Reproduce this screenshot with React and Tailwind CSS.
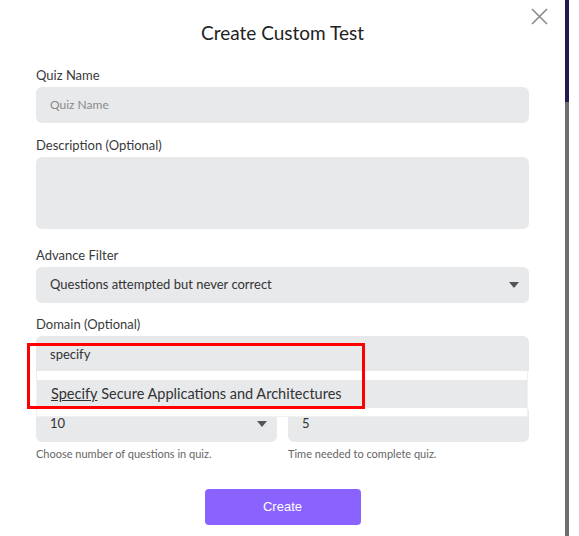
import { useState } from "react";

function Caret() {
  return (
    <svg width="10" height="6" viewBox="0 0 10 6" className="shrink-0">
      <path d="M0 0h10L5 6z" fill="#555" />
    </svg>
  );
}

function Label({ children, className = "" }) {
  return (
    <p className={`text-[13px] leading-4 text-[#3a3a3a] ${className}`}>{children}</p>
  );
}

export default function App() {
  const [domain, setDomain] = useState("specify");

  return (
    <div className="w-[579px] h-[536px] bg-white flex overflow-hidden font-['Lato','Noto_Sans',sans-serif]">
      {/* MODAL */}
      <div className="relative w-[565px] h-full px-9 pt-[21px]">
        <button className="absolute right-[17px] top-[8px] text-[#8a8a8a]">
          <svg width="17" height="17" viewBox="0 0 17 17" fill="none" stroke="currentColor" strokeWidth="1.6">
            <path d="M1 1l15 15M16 1L1 16" />
          </svg>
        </button>

        <h1 className="text-center text-[19px] leading-6 text-[#222]">Create Custom Test</h1>

        <Label className="mt-[22px]">Quiz Name</Label>
        <div className="mt-1 h-9 rounded-md bg-[#e8e9eb] flex items-center px-[14px] text-[12px] text-[#8a8a8a]">
          Quiz Name
        </div>

        <Label className="mt-[14px]">Description (Optional)</Label>
        <div className="mt-1 h-[72px] rounded-md bg-[#e8e9eb]" />

        <Label className="mt-[18px]">Advance Filter</Label>
        <div className="mt-1 h-9 rounded-md bg-[#e8e9eb] flex items-center justify-between pl-[14px] pr-[10px] text-[13px] text-[#333]">
          <span>Questions attempted but never correct</span>
          <Caret />
        </div>

        <Label className="mt-[13px]">Domain (Optional)</Label>
        <input
          value={domain}
          onChange={(e) => setDomain(e.target.value)}
          className="mt-1 w-full h-[35px] rounded-t-md bg-[#e8e9eb] px-[14px] text-[13px] text-[#333] outline-none"
        />

        {/* labels of this row sit under the open list */}
        <div className="mt-[15px] grid grid-cols-2 gap-[11px]">
          <div>
            <div className="h-4" />
            <div className="mt-1 h-9 rounded-md bg-[#e8e9eb] flex items-center justify-between pl-[14px] pr-[10px] text-[13px] text-[#333]">
              <span>10</span>
              <Caret />
            </div>
            <p className="mt-[5px] text-[11px] leading-[14px] text-[#666]">Choose number of questions in quiz.</p>
          </div>
          <div>
            <div className="h-4" />
            <div className="mt-1 h-9 rounded-md bg-[#e8e9eb] flex items-center px-[14px] text-[13px] text-[#333]">
              5
            </div>
            <p className="mt-[5px] text-[11px] leading-[14px] text-[#666]">Time needed to complete quiz.</p>
          </div>
        </div>

        <div className="mt-[28px] flex justify-center">
          <button className="w-[156px] h-9 rounded bg-[#8a63ff] text-white text-[13px] font-['Liberation_Sans',Arial,sans-serif]">
            Create
          </button>
        </div>

        {/* AUTOCOMPLETE LIST */}
        <div className="absolute left-9 top-[371px] w-[492px] h-[46px] bg-white border border-t-0 border-[#f0f0f0] pt-[9px]">
          <div className="h-[28px] bg-[#e8e9eb] flex items-center px-[14px] text-[14.5px] text-[#333]">
            <span className="underline">Specify</span>
            <span>&nbsp;Secure Applications and Architectures</span>
          </div>
        </div>

        {/* HIGHLIGHT BOX */}
        <div className="absolute left-[27px] top-[343px] w-[338px] h-[66px] border-[3px] border-[#ff0000]" />
      </div>

      {/* PAGE EDGE */}
      <div className="w-1 h-full flex flex-col">
        <div className="h-[102px] bg-[#221c52]" />
        <div className="flex-1 bg-[#6e6e6e]" />
      </div>
      <div className="flex-1" />
    </div>
  );
}
